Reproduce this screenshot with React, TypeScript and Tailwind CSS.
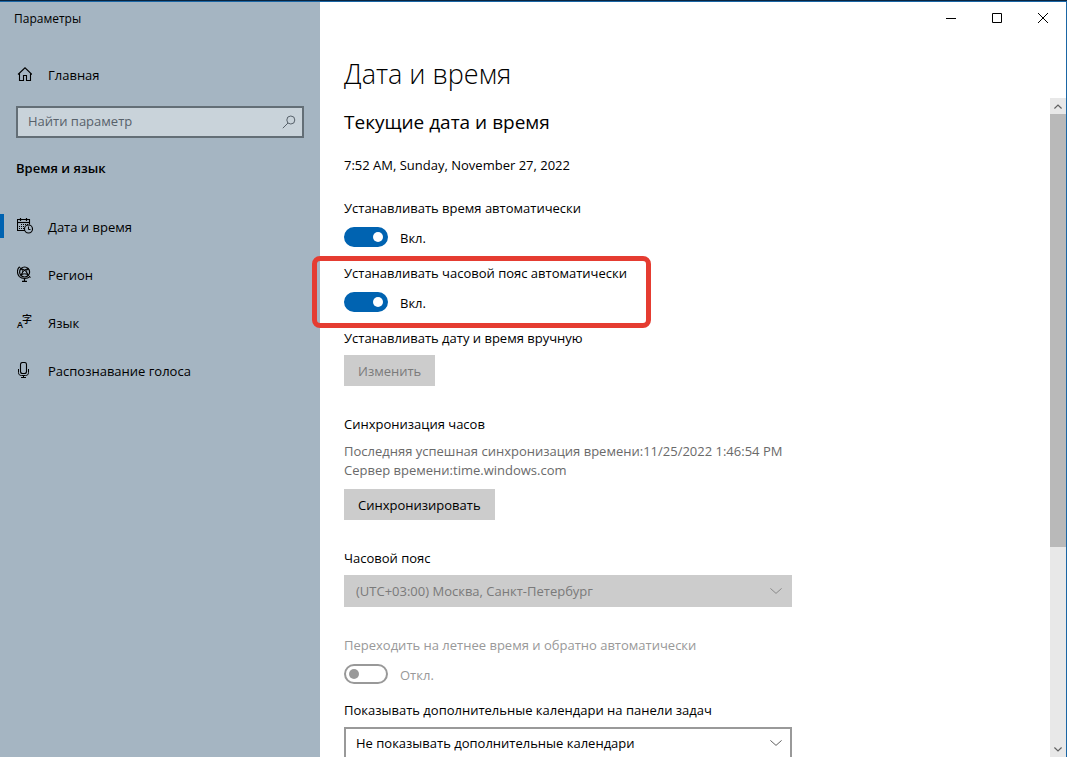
import React, { useState } from 'react';

const HomeIcon = () => (
  <svg className="w-4 h-4" viewBox="0 0 16 16" fill="none" stroke="currentColor" strokeWidth="1.1">
    <path d="M2 7.5 L9 0.8 L16 7.5" />
    <path d="M3.5 6.2 V13.5 H7.5 V8.5 H10.5 V13.5 H14.5 V6.2" />
  </svg>
);

const CalendarIcon = () => (
  <svg className="w-4 h-4" viewBox="0 0 16 16" fill="none" stroke="currentColor">
    <path d="M8 12.5 H0.5 V1.5 H12.5 V6.5" strokeWidth="1.1" />
    <path d="M0 4.5 H13" strokeWidth="1.1" />
    <path d="M3.5 0 V3 M9.5 0 V3" strokeWidth="1.2" />
    <path d="M4 6.5 H11" strokeDasharray="1 1" />
    <path d="M2 8.5 H8" strokeDasharray="1 1" />
    <path d="M2 10.5 H7" strokeDasharray="1 1" />
    <circle cx="11.5" cy="11" r="4" strokeWidth="1.1" />
    <path d="M11.5 8.5 V11.5 H13.5" />
  </svg>
);

const GlobeIcon = () => (
  <svg className="w-4 h-4" viewBox="0 0 16 16" fill="none" stroke="currentColor">
    <circle cx="7.6" cy="6" r="5" strokeWidth="1.2" />
    <path d="M4 2.6 C7 3 10.4 6 11.2 9.4 M11.2 2.6 C8.2 3 4.8 6 4 9.4" />
    <path d="M4.2 3 C6.4 4.6 8.8 4.6 11 3 M4.2 9 C6.4 7.4 8.8 7.4 11 9" />
    <path d="M4.6 2.8 C6 5 6 7 4.6 9.2 M10.6 2.8 C9.2 5 9.2 7 10.6 9.2" strokeWidth="0.8" />
    <path d="M2.4 0.8 C-0.4 3.6 0 8 2.4 10.6 C5 13.2 10.2 13.2 13 10.6" strokeWidth="1.1" />
    <path d="M2 0.8 L4 2.6 M11.4 9.4 L13.6 11.4" />
    <path d="M7.5 12.4 V15 M5 15.4 H10" strokeWidth="1.2" />
  </svg>
);

const LanguageIcon = () => (
  <svg className="w-4 h-4 overflow-visible" viewBox="0 0 16 16" fill="currentColor">
    <text x="0" y="14" fontSize="9" fontFamily="Open Sans" fontWeight="600">A</text>
    <text x="5" y="9" fontSize="10" fontFamily="Noto Sans CJK SC" fontWeight="500">字</text>
  </svg>
);

const MicIcon = () => (
  <svg className="w-4 h-4" viewBox="0 0 16 16" fill="none" stroke="currentColor">
    <rect x="3.5" y="0.5" width="6" height="11" rx="2" strokeWidth="1.1" />
    <path d="M1.5 7 V10.5 C1.5 12.5 2.5 13.5 4.5 13.5 H8.5 C10.5 13.5 11.5 12.5 11.5 10.5 V7" />
    <path d="M6.5 13.5 V15.5 M4 15.5 H9" />
  </svg>
);

const Chevron = ({ className }: { className: string }) => (
  <svg className={className} viewBox="0 0 12 6" fill="none" stroke="currentColor">
    <path d="M0.4 0.4 L6 5.4 L11.6 0.4" />
  </svg>
);

const ScrollArrow = ({ className }: { className: string }) => (
  <svg className={className} viewBox="0 0 8 5" fill="none" stroke="currentColor" strokeWidth="1.2">
    <path d="M0.4 0.5 L4 4 L7.6 0.5" />
  </svg>
);

const navItems = [
  { label: 'Дата и время', icon: <CalendarIcon />, active: true },
  { label: 'Регион', icon: <GlobeIcon />, active: false },
  { label: 'Язык', icon: <LanguageIcon />, active: false },
  { label: 'Распознавание голоса', icon: <MicIcon />, active: false },
];

type ToggleProps = {
  id: string;
  label: string;
  initial?: boolean;
  disabled?: boolean;
};

const Toggle = ({ id, label, initial = false, disabled = false }: ToggleProps) => {
  const [on, setOn] = useState(initial);

  return (
    <div className={disabled ? 'text-[#999999]' : 'text-black'}>
      <label htmlFor={id} className="block">{label}</label>
      <div className="mt-[9px] flex h-5 items-center gap-3">
        <input
          id={id}
          type="checkbox"
          role="switch"
          checked={on}
          disabled={disabled}
          onChange={(e) => setOn(e.target.checked)}
          className="flex h-5 w-11 shrink-0 appearance-none items-center rounded-full border-2 border-[#999999] px-[3px] before:h-[10px] before:w-[10px] before:rounded-full before:bg-[#999999] checked:justify-end checked:border-[#0063b1] checked:bg-[#0063b1] checked:before:bg-white"
        />
        <span className="pt-[2px]">{on ? 'Вкл.' : 'Откл.'}</span>
      </div>
    </div>
  );
};

const Sidebar = () => (
  <aside className="w-80 shrink-0 bg-[#a5b5c2]">
    <div className="flex h-8 items-center px-[14px] pt-[2px] text-xs">Параметры</div>

    <a href="#home" className="mt-[21px] flex h-10 items-center gap-4 px-4">
      <HomeIcon />
      Главная
    </a>

    <div className="relative mx-4 mt-[11px]">
      <input
        type="text"
        aria-label="Найти параметр"
        placeholder="Найти параметр"
        className="block h-8 w-full border-2 border-[#636e76] bg-[#c9d3da] px-[10px] pb-[2px] placeholder:text-[#57616a]"
      />
      <svg className="absolute right-2 top-[9px] h-[14px] w-[14px] text-[#57616a]" viewBox="0 0 14 14" fill="none" stroke="currentColor">
        <circle cx="8.8" cy="5" r="4" />
        <path d="M6 8 L0.8 13.2" />
      </svg>
    </div>

    <h2 className="mx-4 mt-5 font-semibold">Время и язык</h2>

    <nav className="mt-6">
      {navItems.map((item) => (
        <a key={item.label} href="#" className="flex h-12 items-center">
          <span className={item.active ? 'h-6 w-1 bg-[#0063b1]' : 'h-6 w-1'}></span>
          <span className="ml-[13px] mr-[15px]">{item.icon}</span>
          <span className="pt-px">{item.label}</span>
        </a>
      ))}
    </nav>
  </aside>
);

const WindowButtons = () => (
  <div className="flex h-8 justify-end">
    <button aria-label="Свернуть" className="flex w-[46px] items-center justify-center">
      <svg className="h-[10px] w-[10px]" viewBox="0 0 10 10" stroke="currentColor"><path d="M0 5.5 H10" /></svg>
    </button>
    <button aria-label="Развернуть" className="flex w-[46px] items-center justify-center">
      <svg className="h-[10px] w-[10px]" viewBox="0 0 10 10" fill="none" stroke="currentColor"><path d="M0.5 0.5 H9.5 V9.5 H0.5 Z" /></svg>
    </button>
    <button aria-label="Закрыть" className="flex w-[46px] items-center justify-center">
      <svg className="h-[10px] w-[10px]" viewBox="0 0 10 10" stroke="currentColor"><path d="M0 0 L10 10 M10 0 L0 10" /></svg>
    </button>
  </div>
);

const Scrollbar = () => (
  <div className="flex w-4 shrink-0 flex-col bg-[#e8e8e8] text-[#606060]">
    <button aria-label="Вверх" className="flex h-4 items-center justify-center">
      <ScrollArrow className="h-[5px] w-2 rotate-180" />
    </button>
    <div className="flex min-h-0 flex-1 flex-col">
      <div className="h-[69%] bg-[#b9b9b9]"></div>
    </div>
    <button aria-label="Вниз" className="flex h-4 items-center justify-center">
      <ScrollArrow className="h-[5px] w-2" />
    </button>
  </div>
);

const App: React.FC = () => {
  return (
    <div className="flex h-screen flex-col overflow-hidden border-t border-[#0a2540] bg-white font-['Open_Sans','Noto_Sans',sans-serif] text-[13px] leading-5 text-black">
      <div className="flex min-h-0 flex-1 border-r border-t border-[#1a66a5]">
        <Sidebar />

        <main className="flex min-w-0 flex-1 flex-col">
          <WindowButtons />
          <h1 className="mt-6 px-6 text-[27px] font-light leading-8">Дата и время</h1>

          <div className="mt-2 flex min-h-0 flex-1">
            <div className="min-w-0 flex-1 px-6 pt-[10px]">
              <h2 className="text-[19px] leading-7">Текущие дата и время</h2>
              <p className="mt-[19px]">7:52 AM, Sunday, November 27, 2022</p>

              <div className="mt-[23px]">
                <Toggle id="auto-time" label="Устанавливать время автоматически" initial />
              </div>

              <div className="relative mt-4 w-fit">
                <Toggle id="auto-zone" label="Устанавливать часовой пояс автоматически" initial />
                <div className="pointer-events-none absolute -bottom-4 -left-8 -right-6 -top-[7px] rounded-lg border-[5px] border-[#e53c31]"></div>
              </div>

              <p className="mt-4">Устанавливать дату и время вручную</p>
              <button disabled className="mt-[7px] block h-[31px] bg-[#cccccc] px-[14px] text-[#7a7a7a]">Изменить</button>

              <h3 className="mt-7">Синхронизация часов</h3>
              <p className="mt-2 leading-[19px] text-[#6a6a6a]">
                Последняя успешная синхронизация времени:11/25/2022 1:46:54 PM
                <br />
                Сервер времени:time.windows.com
              </p>
              <button className="mt-[9px] block h-[31px] bg-[#cccccc] px-[14px]">Синхронизировать</button>

              <label htmlFor="zone" className="mt-7 block">Часовой пояс</label>
              <div className="relative mt-[7px] max-w-[448px]">
                <select id="zone" disabled className="block h-8 w-full appearance-none bg-[#cccccc] px-3 text-[#7a7a7a] opacity-100">
                  <option>(UTC+03:00) Москва, Санкт-Петербург</option>
                </select>
                <Chevron className="pointer-events-none absolute right-[10px] top-[13px] h-[6px] w-3 text-[#8a8a8a]" />
              </div>

              <div className="mt-7">
                <Toggle id="dst" label="Переходить на летнее время и обратно автоматически" disabled />
              </div>

              <label htmlFor="calendars" className="mt-4 block">Показывать дополнительные календари на панели задач</label>
              <div className="relative mt-[7px] max-w-[448px]">
                <select id="calendars" className="block h-8 w-full appearance-none border-2 border-[#999999] bg-white px-[10px]">
                  <option>Не показывать дополнительные календари</option>
                </select>
                <Chevron className="pointer-events-none absolute right-[10px] top-[13px] h-[6px] w-3 text-[#606060]" />
              </div>
            </div>
            <Scrollbar />
          </div>
        </main>
      </div>
    </div>
  );
};

export default App;
